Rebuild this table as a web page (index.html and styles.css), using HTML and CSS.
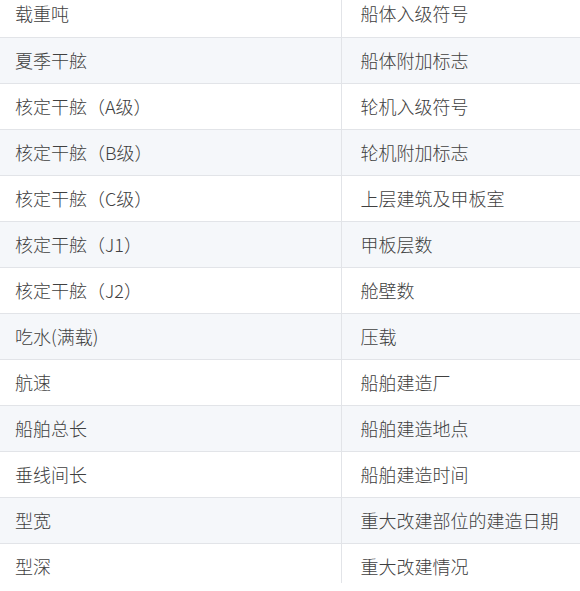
FILE: index.html
```html
<!DOCTYPE html>
<html lang="zh">
<head>
<meta charset="utf-8">
<link rel="stylesheet" href="styles.css">
</head>
<body>
<div class="viewport">
<table class="spec">
<tbody>
<tr><td>载重吨</td><td>船体入级符号</td></tr>
<tr><td>夏季干舷</td><td>船体附加标志</td></tr>
<tr><td>核定干舷（A级）</td><td>轮机入级符号</td></tr>
<tr><td>核定干舷（B级）</td><td>轮机附加标志</td></tr>
<tr><td>核定干舷（C级）</td><td>上层建筑及甲板室</td></tr>
<tr><td>核定干舷（J1）</td><td>甲板层数</td></tr>
<tr><td>核定干舷（J2）</td><td>舱壁数</td></tr>
<tr><td>吃水(满载)</td><td>压载</td></tr>
<tr><td>航速</td><td>船舶建造厂</td></tr>
<tr><td>船舶总长</td><td>船舶建造地点</td></tr>
<tr><td>垂线间长</td><td>船舶建造时间</td></tr>
<tr><td>型宽</td><td>重大改建部位的建造日期</td></tr>
<tr><td>型深</td><td>重大改建情况</td></tr>
</tbody>
</table>
</div>
</body>
</html>
```

FILE: styles.css
```css
html, body {
  margin: 0;
  padding: 0;
  background: #fff;
}
.viewport {
  height: 583px;
  overflow: hidden;
}
.spec {
  margin-top: -9px;
  width: 100%;
  border-collapse: collapse;
  font-family: "Noto Sans CJK SC", "Noto Sans", sans-serif;
  font-size: 18px;
  font-weight: 300;
  color: #404040;
}
.spec td {
  height: 46px;
  padding: 0 0 1px 15px;
  border-bottom: 1px solid #e2e4e8;
  vertical-align: middle;
  box-sizing: border-box;
  line-height: 24px;
}
.spec td:first-child {
  width: 341px;
  border-right: 1px solid #e2e4e8;
}
.spec td:last-child {
  padding-left: 19px;
}
.spec tr:nth-child(even) td {
  background: #f5f7fa;
}
```
